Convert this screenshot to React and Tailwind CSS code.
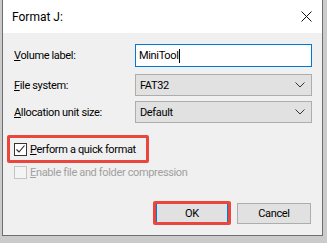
import React from "react";

const font = { fontFamily: 'Roboto, "Noto Sans", Arial, sans-serif' };

function Chevron() {
  return (
    <svg width="10" height="6" viewBox="0 0 10 6" className="block">
      <path d="M0.5 0.5 L5 5 L9.5 0.5" fill="none" stroke="#333" strokeWidth="1" />
    </svg>
  );
}

function Select({ value }) {
  return (
    <div className="flex h-[22px] w-[177px] items-center justify-between border border-[#adadad] bg-[#e1e1e1] pl-[4px] pr-[6px] text-black">
      <span>{value}</span>
      <Chevron />
    </div>
  );
}

export default function App() {
  return (
    <div className="h-[243px] w-[327px] overflow-hidden bg-[#cbcbcb] pl-[2px] text-[11px] tracking-[-0.35px] leading-none whitespace-nowrap" style={font}>
      <div className="flex h-[236px] w-[321px] flex-col border-x border-b border-[#6e6e6e] bg-[#f0f0f0]">
        {/* Title bar */}
        <div className="flex h-[33px] items-center justify-between bg-white pl-[9px] pr-[10px]">
          <span className="text-[12px] tracking-normal text-black">Format J:</span>
          <svg width="11" height="11" viewBox="0 0 11 11" className="block">
            <path d="M0.5 0.5 L10.5 10.5 M10.5 0.5 L0.5 10.5" stroke="#111" strokeWidth="1" />
          </svg>
        </div>

        {/* Fields */}
        <div className="flex flex-col pl-[11px] pt-[11px] text-black">
          <div className="flex items-center">
            <span className="w-[121px]"><u>V</u>olume label:</span>
            <div className="flex h-[23px] w-[177px] items-center border border-[#0078d7] bg-white pl-[3px]">
              <span>MiniTool</span>
              <span className="ml-[1px] inline-block h-[14px] w-[1px] bg-black" />
            </div>
          </div>
          <div className="mt-[7px] flex items-center">
            <span className="w-[121px]"><u>F</u>ile system:</span>
            <Select value="FAT32" />
          </div>
          <div className="mt-[5px] flex items-center">
            <span className="w-[121px]"><u>A</u>llocation unit size:</span>
            <Select value="Default" />
          </div>
        </div>

        {/* Checkboxes */}
        <div className="mt-[12px] flex flex-col pl-[4px]">
          <div className="relative flex h-[28px] w-[142px] items-center pl-[7px]">
            <div className="absolute inset-0 rounded-[2px] border-[3px] border-[#e9473d]" />
            <div className="flex h-[13px] w-[13px] items-center justify-center border border-[#333] bg-white">
              <svg width="11" height="11" viewBox="0 0 11 11" className="block">
                <path d="M1.5 5.5 L4 8 L9.5 1.5" fill="none" stroke="#222" strokeWidth="1.1" />
              </svg>
            </div>
            <span className="ml-[3px] text-black"><u>P</u>erform a quick format</span>
          </div>
          <div className="mt-[3px] flex items-center pl-[7px]">
            <div className="h-[13px] w-[13px] border border-[#c4c4c4] bg-[#f4f4f4]" />
            <span className="ml-[3px] text-[#a0a0a0]"><u>E</u>nable file and folder compression</span>
          </div>
        </div>

        {/* Buttons */}
        <div className="mt-auto mb-[10px] flex items-center justify-end gap-[6px] pr-[11px] text-black">
          <div className="relative flex h-[24px] w-[78px] items-center justify-center">
            <div className="absolute inset-0 rounded-[2px] border-[3px] border-[#e9473d]" />
            <div className="flex h-[20px] w-[72px] items-center justify-center border border-[#0078d7] bg-[#e1e1e1]">OK</div>
          </div>
          <div className="flex h-[21px] w-[74px] items-center justify-center border border-[#adadad] bg-[#e1e1e1]">Cancel</div>
        </div>
      </div>
    </div>
  );
}
